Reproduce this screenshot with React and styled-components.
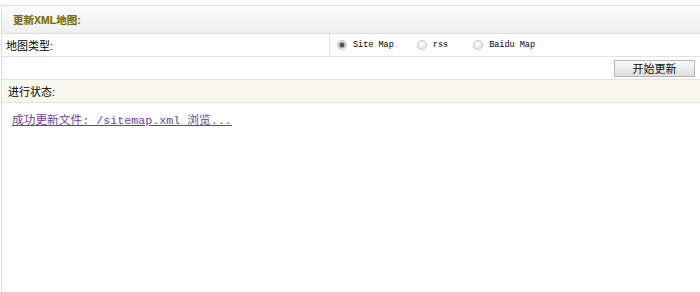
import React from "react";
import styled, { createGlobalStyle } from "styled-components";

const Global = createGlobalStyle`
  html, body { margin: 0; padding: 0; background: #fff; }
  body { font-family: "Liberation Sans", "Noto Sans CJK SC", sans-serif; font-size: 12px; color: #000; }
`;

const Page = styled.div`
  padding-top: 5px;
`;

const Panel = styled.div`
  margin-left: 1px;
  border-left: 1px solid #dcdcdc;
  min-height: 287px;
`;

const Header = styled.div`
  height: 27px;
  display: flex;
  align-items: center;
  padding-left: 11px;
  border-top: 1px solid #dcdcdc;
  border-bottom: 1px solid #dcdcdc;
  background: linear-gradient(#fcfcfc, #efefef);
  font-size: 10.5px;
  font-weight: bold;
  color: #7a6f10;
  text-shadow: 0 0 1px #c9c08a;
`;

const Row = styled.div`
  display: flex;
  height: 22px;
  border-bottom: 1px solid #e3e3e3;
  background: ${p => p.$tint ? "#f8f9ec" : "#fff"};
  align-items: stretch;
`;

const Label = styled.div`
  width: ${p => p.$wide ? "auto" : "323px"};
  flex: ${p => p.$wide ? 1 : "none"};
  display: flex;
  align-items: center;
  padding-left: ${p => p.$pad || 4}px;
  border-right: ${p => p.$wide ? "none" : "1px solid #e3e3e3"};
  font-size: 11px;
`;

const Options = styled.div`
  display: flex;
  align-items: center;
  padding-left: 7px;
`;

const Option = styled.label`
  display: flex;
  align-items: center;
  margin-right: ${p => p.$gap}px;
  font-family: "Liberation Mono", "Noto Sans CJK SC", monospace;
  font-size: 8.5px;
`;

const Dot = styled.span`
  width: 8px;
  height: 8px;
  border-radius: 50%;
  margin-right: 6px;
  border: 1px solid #c4c4c4;
  background: ${p => p.$on
    ? "radial-gradient(circle, #555 0 2px, #9a9a9a 2.5px, #e6e6e6 3.5px)"
    : "radial-gradient(circle at 40% 35%, #fff, #dcdcdc)"};
`;

const Actions = styled.div`
  flex: 1;
  display: flex;
  justify-content: flex-end;
  align-items: center;
  padding-right: 5px;
`;

const Button = styled.button`
  width: 81px;
  height: 17px;
  padding: 0;
  border: 1px solid #b5b5b5;
  background: linear-gradient(#fafafa, #dedede);
  font-family: "Noto Sans CJK SC", sans-serif;
  font-size: 11px;
  line-height: 15px;
  color: #111;
`;

const Content = styled.div`
  padding: 7px 10px;
`;

const Result = styled.a`
  font-family: "Liberation Mono", "Noto Sans CJK SC", monospace;
  font-size: 11.7px;
  color: #6b3fa0;
  text-decoration: underline;
`;

export default function App() {
  return (
    <Page>
      <Global />
      <Panel>
        <Header>更新XML地图:</Header>
        <Row>
          <Label>地图类型:</Label>
          <Options>
            <Option $gap={23}><Dot $on />Site Map</Option>
            <Option $gap={25}><Dot />rss</Option>
            <Option $gap={0}><Dot />Baidu Map</Option>
          </Options>
        </Row>
        <Row>
          <Actions><Button>开始更新</Button></Actions>
        </Row>
        <Row $tint>
          <Label $wide $pad={6}>进行状态:</Label>
        </Row>
        <Content>
          <Result href="#">成功更新文件: /sitemap.xml 浏览...</Result>
        </Content>
      </Panel>
    </Page>
  );
}
